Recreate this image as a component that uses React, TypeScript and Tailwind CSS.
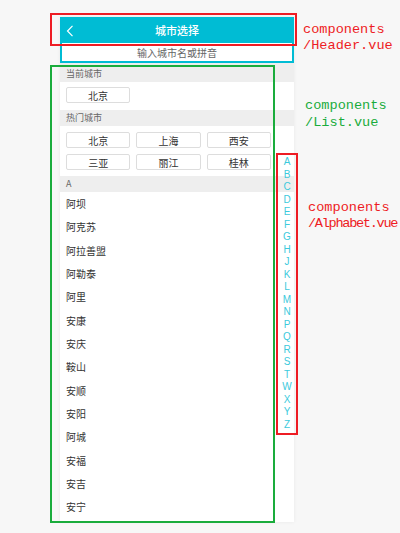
import React from 'react';

const cn = { fontFamily: '"Noto Sans CJK SC", "Noto Sans", sans-serif' };
const mono = { fontFamily: '"Liberation Mono", "DejaVu Sans Mono", monospace' };

const hotCities = ['北京', '上海', '西安', '三亚', '丽江', '桂林'];
const aCities = ['阿坝', '阿克苏', '阿拉善盟', '阿勒泰', '阿里', '安康', '安庆', '鞍山', '安顺', '安阳', '阿城', '安福', '安吉', '安宁'];
const letters = ['A', 'B', 'C', 'D', 'E', 'F', 'G', 'H', 'J', 'K', 'L', 'M', 'N', 'P', 'Q', 'R', 'S', 'T', 'W', 'X', 'Y', 'Z'];

const SectionTitle = ({ children, className = '' }: { children: React.ReactNode; className?: string }) => (
  <div className={`flex items-center bg-[#eeeeee] pl-[6px] text-[9px] text-[#666] ${className}`}>{children}</div>
);

const CityButton = ({ name }: { name: string }) => (
  <div className="flex h-[16px] items-center justify-center rounded-[2px] border border-[#dddddd] bg-white text-[10px] text-[#333]">
    {name}
  </div>
);

const App = () => {
  return (
    <div className="relative h-[533px] w-[400px] overflow-hidden bg-[#f7f7f7]" style={cn}>
      {/* phone */}
      <div className="ml-[60px] mt-[17px] flex h-[505px] w-[234px] flex-col bg-white shadow-[0_0_4px_rgba(0,0,0,0.06)]">
        {/* Header */}
        <div className="relative flex h-[26px] items-center justify-center bg-[#00bcd4]">
          <svg className="absolute left-[6px] top-[8px]" width="8" height="12" viewBox="0 0 8 12">
            <path d="M6.5 0.8 L1.5 6 L6.5 11.2" fill="none" stroke="white" strokeWidth="1.2" />
          </svg>
          <span className="text-[11px] font-medium text-white">城市选择</span>
        </div>
        {/* Search */}
        <div className="bg-[#00bcd4] px-[2px] pb-[2px]">
          <div className="flex h-[18px] items-center justify-center bg-white text-[10px] text-[#666]">输入城市名或拼音</div>
        </div>

        {/* List */}
        <div className="flex flex-1 flex-col overflow-hidden">
          <SectionTitle className="h-[19px] pt-[2px]">当前城市</SectionTitle>
          <div className="h-[28px] pl-[6px] pt-[5px]">
            <div className="w-[64px]">
              <CityButton name="北京" />
            </div>
          </div>
          <SectionTitle className="h-[16px]">热门城市</SectionTitle>
          <div className="grid grid-cols-3 gap-[6px] py-[6px] pl-[6px] pr-[23px]">
            {hotCities.map((c) => (
              <CityButton key={c} name={c} />
            ))}
          </div>
          <SectionTitle className="h-[16px]">A</SectionTitle>
          {aCities.map((c) => (
            <div key={c} className="flex h-[23.33px] shrink-0 items-center pl-[6px] text-[10px] text-[#333]">
              {c}
            </div>
          ))}
        </div>
      </div>

      {/* Alphabet */}
      <div className="absolute left-[276px] top-[156px] flex w-[22px] flex-col items-center">
        {letters.map((l) => (
          <div key={l} className="flex h-[12.5px] items-center text-[10px] leading-none text-[#3ccadc]" style={{ fontFamily: '"Liberation Sans", Arial, sans-serif' }}>
            {l}
          </div>
        ))}
      </div>

      {/* annotation boxes */}
      <div className="absolute left-[50px] top-[13px] h-[33px] w-[247px] border-2 border-[#ee1c24]" />
      <div className="absolute left-[50px] top-[65px] h-[458px] w-[225px] border-2 border-[#1aac3c]" />
      <div className="absolute left-[276px] top-[153px] h-[282px] w-[22px] border-2 border-[#ee1c24]" />

      {/* annotation labels */}
      <div className="absolute left-[303px] top-[22px] text-[13.6px] leading-[16px] text-[#ee1c24]" style={mono}>
        <div>components</div>
        <div>/Header.vue</div>
      </div>
      <div className="absolute left-[305px] top-[97px] text-[13.6px] leading-[17px] text-[#1aac3c]" style={mono}>
        <div>components</div>
        <div>/List.vue</div>
      </div>
      <div className="absolute left-[308px] top-[200px] text-[13.6px] leading-[16px] text-[#ee1c24]" style={mono}>
        <div>components</div>
        <div className="tracking-[-1.3px]">/Alphabet.vue</div>
      </div>
    </div>
  );
};

export default App;
